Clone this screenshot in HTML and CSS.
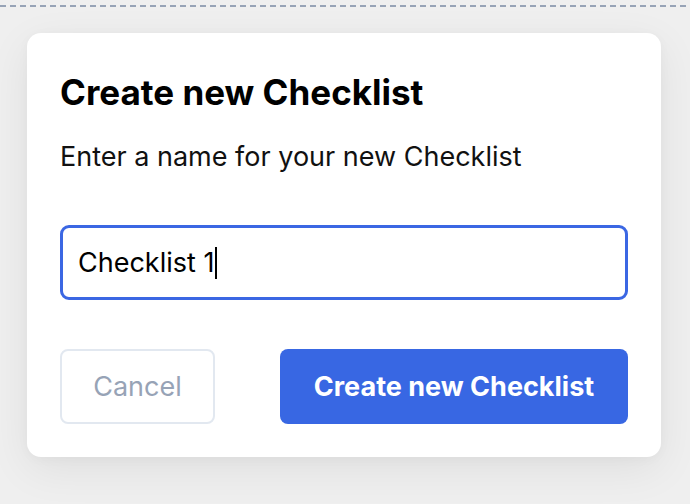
FILE: index.html
```html
<!DOCTYPE html>
<html>
<head>
<meta charset="utf-8">
<link rel="stylesheet" href="styles.css">
</head>
<body>
<div class="page">
  <div class="dash"></div>
  <div class="card">
    <h1 class="title">Create new Checklist</h1>
    <p class="subtitle">Enter a name for your new Checklist</p>
    <div class="field"><span class="value">Checklist 1</span><span class="caret"></span></div>
    <div class="actions">
      <button class="btn btn-cancel">Cancel</button>
      <button class="btn btn-primary">Create new Checklist</button>
    </div>
  </div>
</div>
</body>
</html>
```

FILE: styles.css
```css
html, body {
  margin: 0;
  padding: 0;
  height: 100%;
}
body {
  background: #efefef;
  font-family: Inter, "Liberation Sans", sans-serif;
  overflow: hidden;
}
.page {
  padding-top: 5px;
}
.dash {
  height: 2px;
  background: repeating-linear-gradient(to right, #97a3b6 0 6px, transparent 6px 10px);
}
.card {
  margin: 26px 0 0 27px;
  width: 634px;
  box-sizing: border-box;
  background: #fff;
  border-radius: 14px;
  padding: 33px;
  box-shadow: 0 12px 44px rgba(0, 0, 0, 0.07), 0 2px 12px rgba(0, 0, 0, 0.03);
}
.title {
  margin: 0;
  font-size: 35px;
  font-weight: 700;
  line-height: 53px;
  color: #000;
}
.subtitle {
  margin: 20px 0 0;
  font-size: 27px;
  line-height: 36px;
  color: #111;
}
.field {
  margin-top: 50px;
  height: 75px;
  box-sizing: border-box;
  border: 3px solid #3b67e3;
  border-radius: 9px;
  display: flex;
  align-items: center;
  padding-left: 15px;
  font-size: 27px;
  color: #000;
}
.caret {
  display: inline-block;
  width: 2px;
  height: 32px;
  background: #000;
  margin-left: 1px;
}
.actions {
  margin-top: 49px;
  display: flex;
  justify-content: space-between;
}
.btn {
  height: 75px;
  border-radius: 8px;
  font-family: inherit;
  font-size: 27px;
  box-sizing: border-box;
  cursor: pointer;
  padding: 0;
}
.btn-cancel {
  width: 155px;
  background: #fff;
  border: 2px solid #e2e8f0;
  color: #97a3b6;
}
.btn-primary {
  width: 348px;
  background: #3867e3;
  border: none;
  color: #fff;
  font-weight: 700;
}
```
